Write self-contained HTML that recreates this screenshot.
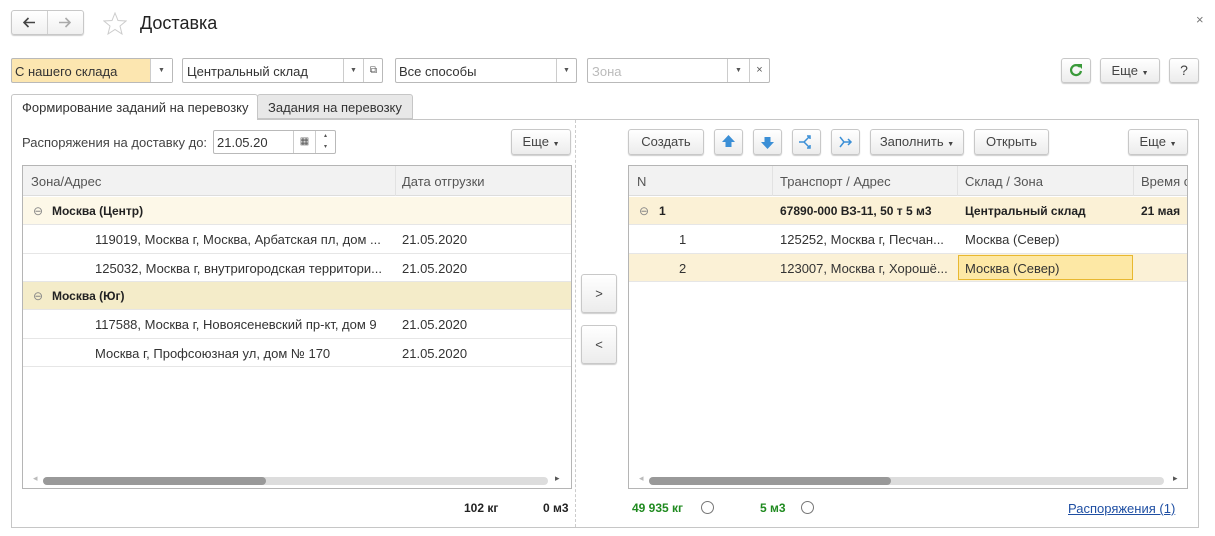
<!DOCTYPE html>
<html><head><meta charset="utf-8">
<style>
*{box-sizing:border-box;margin:0;padding:0}
body{width:1215px;height:536px;background:#fff;font-family:"Liberation Sans",Arial,sans-serif;font-size:12px;color:#333;position:relative;overflow:hidden}
.a{position:absolute}
.btn{position:absolute;border:1px solid #c8c8c8;border-radius:3px;background:linear-gradient(#fff,#ececec);box-shadow:0 1px 1px rgba(0,0,0,.2);text-align:center;color:#444;font-size:13px}
.fld{position:absolute;border:1px solid #b9b9b9;border-radius:2px;background:#fff;font-size:13px;color:#333}
.dd{position:absolute;top:0;bottom:0;border-left:1px solid #ccc;text-align:center;font-size:7px;color:#555}
.tbl{position:absolute;border:1px solid #b5b5b5;background:#fff;overflow:hidden}
.hd{position:absolute;left:0;right:0;top:0;height:30px;background:#f2f2f2;border-bottom:1px solid #ddd}
.row{position:absolute;left:0;right:0;border-bottom:1px solid #e6e6e6}
.t{position:absolute;white-space:nowrap}
.b{font-weight:bold;color:#222}
.sb{position:absolute;height:8px;border-radius:4px;background:#ddd}
.sbt{position:absolute;height:8px;border-radius:4px;background:#999}
</style></head><body>

<div class="btn" style="left:11px;top:10px;width:73px;height:25px;background:linear-gradient(#fff,#f0f0f0)"></div>
<div class="a" style="left:47px;top:11px;width:1px;height:23px;background:#d0d0d0"></div>
<svg class="a" style="left:23px;top:17px" width="13" height="11"><path d="M1 5.5H12M5.5 1L1 5.5L5.5 10" stroke="#444" stroke-width="1.6" fill="none"/></svg>
<svg class="a" style="left:58px;top:17px" width="13" height="11"><path d="M1 5.5H12M7.5 1L12 5.5L7.5 10" stroke="#aaa" stroke-width="1.6" fill="none"/></svg>
<svg class="a" style="left:103px;top:12px" width="24" height="23"><path d="M12 1L15 8.5L23 9L17 14L19 22L12 17.5L5 22L7 14L1 9L9 8.5Z" stroke="#ccc" fill="none"/></svg>
<div class="t" style="left:140px;top:13px;font-size:18px;color:#222">Доставка</div>
<div class="t" style="left:1196px;top:12px;font-size:13px;color:#777">×</div>

<div class="fld" style="left:11px;top:58px;width:162px;height:25px;background:#fce6b0"><span class="t" style="left:3px;top:5px">С нашего склада</span><div class="dd" style="left:138px;width:22px;background:#fff;line-height:23px">▼</div></div>
<div class="fld" style="left:182px;top:58px;width:201px;height:25px"><span class="t" style="left:4px;top:5px">Центральный склад</span><div class="dd" style="left:160px;width:20px;line-height:23px">▼</div><div class="dd" style="left:180px;width:20px;line-height:23px;font-size:10px">⧉</div></div>
<div class="fld" style="left:395px;top:58px;width:182px;height:25px"><span class="t" style="left:3px;top:5px">Все способы</span><div class="dd" style="left:160px;width:20px;line-height:23px">▼</div></div>
<div class="fld" style="left:587px;top:58px;width:183px;height:25px"><span class="t" style="left:4px;top:5px;color:#bbb">Зона</span><div class="dd" style="left:139px;width:22px;line-height:23px">▼</div><div class="dd" style="left:161px;width:20px;line-height:23px;font-size:11px">×</div></div>
<div class="btn" style="left:1061px;top:58px;width:30px;height:25px"><svg width="28" height="23"><path d="M18 8A5 5 0 1 0 19 12" stroke="#3a9a3a" stroke-width="2.2" fill="none"/><path d="M15 5H20V10Z" fill="#3a9a3a"/></svg></div>
<div class="btn" style="left:1100px;top:58px;width:60px;height:25px;line-height:23px">Еще <span style="font-size:7px">▼</span></div>
<div class="btn" style="left:1169px;top:58px;width:30px;height:25px;line-height:23px;font-size:14px">?</div>

<div class="a" style="left:11px;top:119px;width:1188px;height:409px;border:1px solid #c6c6c6"></div>
<div class="a" style="left:11px;top:94px;width:247px;height:26px;border:1px solid #c6c6c6;border-bottom:none;background:#fff;border-radius:3px 3px 0 0"><span class="t" style="left:10px;top:5px;font-size:13px">Формирование заданий на перевозку</span></div>
<div class="a" style="left:257px;top:94px;width:156px;height:25px;border:1px solid #c6c6c6;background:#e8e8e8;border-radius:3px 3px 0 0"><span class="t" style="left:10px;top:5px;font-size:13px">Задания на перевозку</span></div>

<div class="t" style="left:22px;top:135px;font-size:13px;color:#444">Распоряжения на доставку до:</div>
<div class="fld" style="left:213px;top:130px;width:123px;height:24px"><span class="t" style="left:3px;top:4px">21.05.20</span><div class="dd" style="left:79px;width:22px;line-height:22px;font-size:10px">▦</div><div class="dd" style="left:101px;width:20px;font-size:6px;line-height:11px">▴<br>▾</div></div>
<div class="btn" style="left:511px;top:129px;width:60px;height:26px;line-height:24px">Еще <span style="font-size:7px">▼</span></div>

<div class="tbl" style="left:22px;top:165px;width:550px;height:324px">
 <div class="hd"><span class="t" style="left:8px;top:8px;font-size:13px;color:#555">Зона/Адрес</span><div class="a" style="left:372px;top:0;width:1px;height:30px;background:#e2e2e2"></div><span class="t" style="left:379px;top:8px;font-size:13px;color:#555">Дата отгрузки</span></div>
 <div class="row" style="top:31px;height:28px;background:#fdf8e8"><span class="t" style="left:10px;top:7px;color:#888">⊖</span><span class="t b" style="left:29px;top:7px">Москва (Центр)</span></div>
 <div class="row" style="top:59px;height:29px"><span class="t" style="left:72px;top:7px;font-size:13px">119019, Москва г, Москва, Арбатская пл, дом ...</span><span class="t" style="left:379px;top:7px;font-size:13px">21.05.2020</span></div>
 <div class="row" style="top:88px;height:28px"><span class="t" style="left:72px;top:7px;font-size:13px">125032, Москва г, внутригородская территори...</span><span class="t" style="left:379px;top:7px;font-size:13px">21.05.2020</span></div>
 <div class="row" style="top:116px;height:28px;background:#f4ecc9"><span class="t" style="left:10px;top:7px;color:#888">⊖</span><span class="t b" style="left:29px;top:7px">Москва (Юг)</span></div>
 <div class="row" style="top:144px;height:29px"><span class="t" style="left:72px;top:7px;font-size:13px">117588, Москва г, Новоясеневский пр-кт, дом 9</span><span class="t" style="left:379px;top:7px;font-size:13px">21.05.2020</span></div>
 <div class="row" style="top:173px;height:28px"><span class="t" style="left:72px;top:7px;font-size:13px">Москва г, Профсоюзная ул, дом № 170</span><span class="t" style="left:379px;top:7px;font-size:13px">21.05.2020</span></div>
 <div class="sb" style="left:20px;top:311px;width:505px"></div><div class="sbt" style="left:20px;top:311px;width:223px"></div>
 <span class="t" style="left:10px;top:307px;font-size:9px;color:#bbb">◂</span><span class="t" style="left:532px;top:307px;font-size:9px;color:#555">▸</span>
</div>
<div class="t b" style="left:464px;top:501px">102 кг</div>
<div class="t b" style="left:543px;top:501px">0 м3</div>

<div class="a" style="left:575px;top:120px;height:407px;border-left:1px dashed #ccc"></div>
<div class="btn" style="left:581px;top:274px;width:36px;height:39px;line-height:37px">&gt;</div>
<div class="btn" style="left:581px;top:325px;width:36px;height:39px;line-height:37px">&lt;</div>

<div class="btn" style="left:628px;top:129px;width:76px;height:26px;line-height:24px">Создать</div>
<div class="btn" style="left:714px;top:129px;width:29px;height:26px"><svg width="27" height="24"><path d="M13.5 5L7 12H10.5V17H16.5V12H20Z" fill="#3b8fd6"/></svg></div>
<div class="btn" style="left:753px;top:129px;width:29px;height:26px"><svg width="27" height="24"><path d="M13.5 19L7 12H10.5V7H16.5V12H20Z" fill="#3b8fd6"/></svg></div>
<div class="btn" style="left:792px;top:129px;width:29px;height:26px"><svg width="27" height="24"><path d="M6 12H11L16 7M11 12L16 17M14 6H17V9M14 18H17V15" stroke="#3b8fd6" stroke-width="1.5" fill="none"/></svg></div>
<div class="btn" style="left:831px;top:129px;width:29px;height:26px"><svg width="27" height="24"><path d="M8 7L12 12L8 17M12 12H19M16 9L19 12L16 15" stroke="#3b8fd6" stroke-width="1.5" fill="none"/></svg></div>
<div class="btn" style="left:870px;top:129px;width:94px;height:26px;line-height:24px">Заполнить <span style="font-size:7px">▼</span></div>
<div class="btn" style="left:974px;top:129px;width:75px;height:26px;line-height:24px">Открыть</div>
<div class="btn" style="left:1128px;top:129px;width:60px;height:26px;line-height:24px">Еще <span style="font-size:7px">▼</span></div>

<div class="tbl" style="left:628px;top:165px;width:560px;height:324px">
 <div class="hd"><span class="t" style="left:8px;top:8px;font-size:13px;color:#555">N</span><div class="a" style="left:143px;top:0;width:1px;height:30px;background:#e2e2e2"></div><span class="t" style="left:151px;top:8px;font-size:13px;color:#555">Транспорт / Адрес</span><div class="a" style="left:328px;top:0;width:1px;height:30px;background:#e2e2e2"></div><span class="t" style="left:336px;top:8px;font-size:13px;color:#555">Склад / Зона</span><div class="a" style="left:504px;top:0;width:1px;height:30px;background:#e2e2e2"></div><span class="t" style="left:512px;top:8px;font-size:13px;color:#555">Время с</span></div>
 <div class="row" style="top:31px;height:28px;background:#fbf1d6"><span class="t" style="left:10px;top:7px;color:#888">⊖</span><span class="t b" style="left:30px;top:7px">1</span><span class="t b" style="left:151px;top:7px">67890-000 ВЗ-11, 50 т 5 м3</span><span class="t b" style="left:336px;top:7px">Центральный склад</span><span class="t b" style="left:512px;top:7px">21 мая</span></div>
 <div class="row" style="top:59px;height:29px"><span class="t" style="left:50px;top:7px;font-size:13px">1</span><span class="t" style="left:151px;top:7px;font-size:13px">125252, Москва г, Песчан...</span><span class="t" style="left:336px;top:7px;font-size:13px">Москва (Север)</span></div>
 <div class="row" style="top:88px;height:28px;background:#fbf1d6"><span class="t" style="left:50px;top:7px;font-size:13px">2</span><span class="t" style="left:151px;top:7px;font-size:13px">123007, Москва г, Хорошё...</span><div class="a" style="left:329px;top:1px;width:175px;height:25px;background:#fde8a5;border:1px solid #e8b830"></div><span class="t" style="left:336px;top:7px;font-size:13px">Москва (Север)</span></div>
 <div class="sb" style="left:20px;top:311px;width:515px"></div><div class="sbt" style="left:20px;top:311px;width:242px"></div>
 <span class="t" style="left:10px;top:307px;font-size:9px;color:#bbb">◂</span><span class="t" style="left:544px;top:307px;font-size:9px;color:#555">▸</span>
</div>

<div class="t" style="left:632px;top:501px;color:#1f8a1f;font-weight:bold">49 935 кг</div>
<div class="a" style="left:701px;top:501px;width:13px;height:13px;border:1px solid #777;border-radius:50%"></div>
<div class="t" style="left:760px;top:501px;color:#1f8a1f;font-weight:bold">5 м3</div>
<div class="a" style="left:801px;top:501px;width:13px;height:13px;border:1px solid #777;border-radius:50%"></div>
<div class="t" style="left:1068px;top:501px;font-size:13px;color:#1f4fa3;text-decoration:underline">Распоряжения (1)</div>
</body></html>
